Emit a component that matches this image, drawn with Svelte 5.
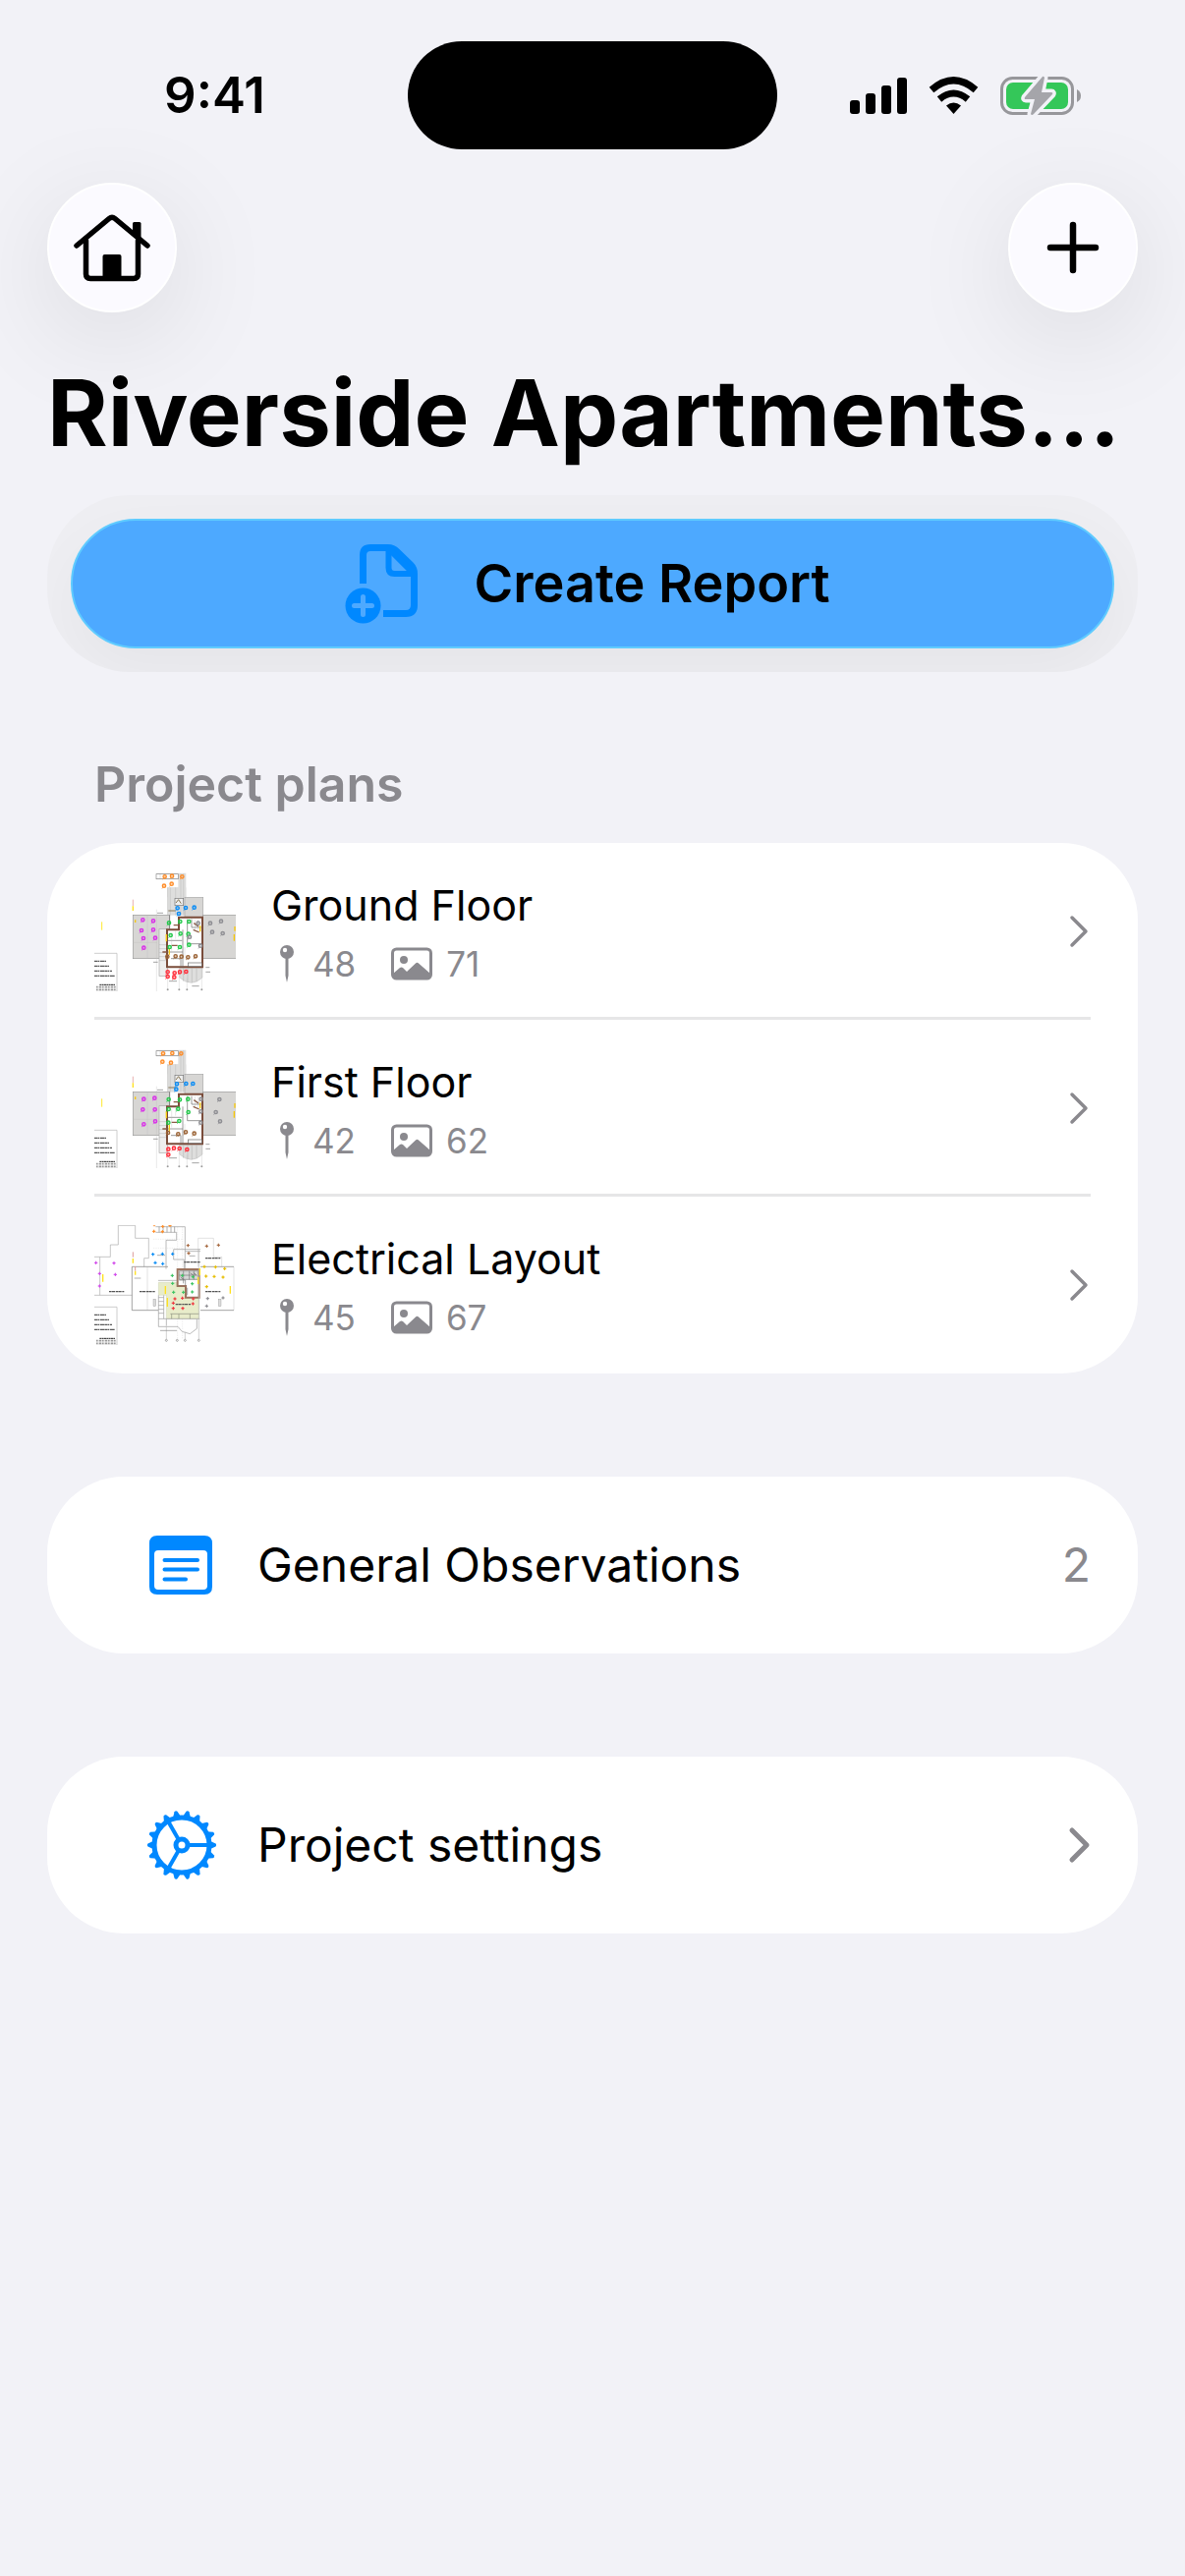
<script lang="ts">
  type Dot = [number, number];
  type Pins = { color: string; at: Dot[] }[];

  interface Plan {
    name: string;
    pins: number;
    photos: number;
    kind: 'floor' | 'electrical';
    markers: Pins;
  }

  const plans: Plan[] = [
    {
      name: 'Ground Floor',
      pins: 48,
      photos: 71,
      kind: 'floor',
      markers: [
        { color: '#ff8d28', at: [[263, 70], [285, 68], [316, 70], [261, 98], [284, 92]] },
        { color: '#0a8cf5', at: [[302, 166], [327, 165], [353, 164], [306, 183]] },
        { color: '#d930e8', at: [[196, 202], [228, 205], [192, 234], [228, 232], [198, 258], [234, 257], [199, 287]] },
        { color: '#22c94a', at: [[276, 211], [310, 207], [337, 207], [281, 249], [311, 244], [335, 245], [278, 285], [309, 285], [337, 278]] },
        { color: '#8e8e93', at: [[402, 212], [435, 206], [408, 239], [440, 243], [365, 212], [372, 281], [339, 254]] },
        { color: '#9a6234', at: [[271, 314], [296, 313], [314, 314], [334, 316], [357, 313]] },
        { color: '#ff2d3a', at: [[272, 361], [272, 375], [293, 364], [292, 377], [309, 361], [328, 360]] }
      ]
    },
    {
      name: 'First Floor',
      pins: 42,
      photos: 62,
      kind: 'floor',
      markers: [
        { color: '#ff8d28', at: [[258, 70], [286, 69], [313, 70], [256, 95], [282, 98]] },
        { color: '#0a8cf5', at: [[300, 163], [328, 162], [349, 162], [298, 179]] },
        { color: '#d930e8', at: [[199, 209], [232, 206], [196, 241], [233, 241], [234, 277], [199, 286]] },
        { color: '#22c94a', at: [[275, 210], [309, 211], [334, 209], [275, 240], [304, 239], [335, 249], [274, 281], [307, 276]] },
        { color: '#8e8e93', at: [[430, 210], [419, 249], [432, 277], [374, 209], [373, 247], [373, 281]] },
        { color: '#9a6234', at: [[273, 312], [304, 316], [327, 310], [353, 314]] },
        { color: '#ff2d3a', at: [[274, 362], [274, 379], [291, 359], [308, 360], [331, 363]] }
      ]
    },
    {
      name: 'Electrical Layout',
      pins: 45,
      photos: 67,
      kind: 'electrical',
      markers: [
        { color: '#ff8d28', at: [[231, 53], [257, 58], [279, 55], [230, 73], [256, 74]] },
        { color: '#0a8cf5', at: [[227, 143], [256, 142], [287, 142], [234, 169], [257, 172]] },
        { color: '#d148ea', at: [[53, 169], [108, 170], [64, 202], [112, 205], [64, 240]] },
        { color: '#3cc463', at: [[286, 208], [317, 208], [349, 212], [287, 232], [347, 233], [290, 259], [320, 259], [347, 258]] },
        { color: '#a86a42', at: [[334, 116], [391, 118], [427, 115], [336, 140]] },
        { color: '#e6bd00', at: [[384, 181], [418, 182], [446, 187], [389, 210], [414, 211], [441, 213], [391, 242]] },
        { color: '#f0353f', at: [[294, 279], [317, 277], [350, 279], [289, 292], [349, 294], [289, 308], [318, 308]] },
        { color: '#8e8e93', at: [[394, 278], [441, 276], [391, 301]] }
      ]
    }
  ];

  const teeth = Array.from({ length: 18 }, (_, i) => i * 20);
  const legend = [328, 343, 358, 373];
</script>

{#snippet chevron(heavy: boolean)}
  <svg class="chevron" viewBox="0 0 24 40" fill="none" stroke="currentColor" stroke-linecap="round" stroke-linejoin="round" stroke-width={heavy ? 5 : 3.5}>
    <path d={heavy ? 'M5 5 L20 20 L5 35' : 'M5 6 L19 20 L5 34'} />
  </svg>
{/snippet}

{#snippet legendBox()}
  <path d="M48 304 H117 V421 H54" fill="none" stroke="#b5b5b5" stroke-width="2" />
  {#each legend as y, i}
    <path d="M48 {y} h{36 + i * 9}" stroke="#222" stroke-width="4" stroke-dasharray="9 1 5 2 13 1" opacity="0.75" />
  {/each}
  <path d="M64 400 H111" stroke="#222" stroke-width="3" stroke-dasharray="6 1" />
  <path d="M54 407 H114 M54 415 H114" stroke="#555" stroke-width="5" stroke-dasharray="5 3 8 2" opacity="0.6" />
{/snippet}

{#snippet thumbnail(plan: Plan)}
  <svg class="thumb" viewBox="48 54 432 366" aria-hidden="true">
    {#if plan.kind === 'floor'}
      <path d="M71 208 V233" stroke="#ffe92e" stroke-width="3" />
      <path d="M166 140 V160" stroke="#d88" stroke-width="2" />
      <path d="M166 160 V174" stroke="#ffe11e" stroke-width="4" />
      <!-- terraces -->
      <path d="M237 59 H328 V133 H271 V103 H304 V79 H237 Z" fill="#dededd" />
      <rect x="271" y="103" width="57" height="85" fill="#dededd" />
      <rect x="237" y="62" width="67" height="15" fill="#fff" stroke="#888" stroke-width="2" />
      <path d="M249 62 V77 M264 62 V77 M290 62 V77 M272 103 V188 M280 103 V188 M296 103 V188 M312 60 V188 M320 60 V188" stroke="#aaa" stroke-width="1" />
      <rect x="324" y="133" width="56" height="60" fill="#d7d6d4" stroke="#a9a9a9" stroke-width="2" />
      <rect x="166" y="187" width="112" height="133" fill="#d7d6d4" stroke="#999" stroke-width="2" />
      <rect x="380" y="187" width="102" height="133" fill="#d7d6d4" stroke="#999" stroke-width="2" />
      <path d="M166 271 H240 M210 187 V320 M238 170 V420" stroke="#bbb" stroke-width="1" />
      <rect x="246" y="230" width="26" height="143" fill="#eee" stroke="#aaa" stroke-width="2" />
      <path d="M246 278 h24 M246 290 h24 M246 302 h24 M246 314 h24 M246 326 h24" stroke="#999" stroke-width="1" />
      <path d="M308 348 H378 V378 Q345 410 308 378 Z" fill="#dededd" stroke="#aaa" />
      <path d="M320 350 V390 M333 350 V392 M346 350 V394 M360 350 V390" stroke="#999" stroke-width="1" />
      <!-- building shell -->
      <path d="M306 194 H378 V346 H270 V232 H306 Z" fill="#fff" stroke="#7a4c3a" stroke-width="6" />
      <path d="M278 188 V228 M270 300 H318 M318 232 V346 M332 200 V275 H376 M272 265 H316 M282 320 H312 V344 M345 200 V225 H374" fill="none" stroke="#666" stroke-width="2" />
      <path d="M284 240 V296 M296 236 V260 M324 285 V320 M355 200 V232 M365 200 V240" stroke="#b5b5b5" stroke-width="1" />
      <rect x="294" y="136" width="26" height="22" fill="#eee" stroke="#777" stroke-width="2" />
      <path d="M297 150 l8 -10 l8 12 M274 174 H296" fill="none" stroke="#875" stroke-width="3" />
      <path d="M352 212 l14 10 M350 232 l18 8 M284 280 h18 M290 218 h14 M256 300 h14" stroke="#8a5a44" stroke-width="4" />
      <rect x="334" y="333" width="42" height="11" fill="#fff" stroke="#666" stroke-width="2" />
      <path d="M268 246 V268 M277 288 V308 M371 220 V238 M173 202 V210 M477 222 V236 M475 246 V266" stroke="#f5c60c" stroke-width="4" />
      <path d="M272 350 V412 M307 350 V412 M331 380 V412 M376 350 V412" stroke="#bbb" stroke-width="1" />
      <path d="M276 389 h24 M346 404 h22 M388 347 h12 M388 361 h14 M228 331 h14 M240 181 h18" stroke="#777" stroke-width="2" />
      {#each [272, 307, 331, 376] as x}
        <circle cx={x} cy="415" r="3" fill="#999" />
      {/each}
      {@render legendBox()}
      {#each plan.markers as group}
        {#each group.at as [x, y]}
          <circle cx={x} cy={y} r="5" fill={group.color} fill-opacity="0.35" stroke={group.color} stroke-width="4" />
          <path d="M{x - 3} {y + 5} l-4 3" stroke={group.color} stroke-width="2" />
        {/each}
      {/each}
    {:else}
      <path d="M48 151 H97 V114 H121 V55 H173 V94 H214 V155 H200 V181 M48 268 H163 M65 151 V268" fill="none" stroke="#aaa" stroke-width="2" />
      <path d="M163 181 H273 M163 181 V314 H243 M372 181 H474 M474 314 H372" fill="none" stroke="#777" stroke-width="2" />
      <path d="M210 181 V314 M474 181 V314 M365 181 V94 H412 V151 H437 V181" fill="none" stroke="#aaa" stroke-width="1" />
      <path d="M235 59 H325 V188 M235 76 H299 V100 H267 V188 M290 128 H372 M290 128 V159 H322 V188 M325 134 H372" fill="none" stroke="#999" stroke-width="2" />
      <path d="M246 59 V76 M258 59 V76 M270 59 V76 M282 59 V76 M293 59 V76" stroke="#888" stroke-width="2" />
      <path d="M228 97 H320 M228 124 H320 M302 60 V400 M317 60 V400" stroke="#ccc" stroke-width="1" stroke-dasharray="4 3" />
      <path d="M244 229 H300 V240 H328 V275 H368 V340 H268 V268 H244 Z" fill="#e8ecca" stroke="#bdc3a0" stroke-width="1" />
      <path d="M302 189 H368 V275 H327 V240 H302 Z" fill="#fff" stroke="#9b735e" stroke-width="6" />
      <path d="M307 194 H365 V220 H307 Z" fill="#d7d7d7" stroke="#777" stroke-width="2" />
      <path d="M320 194 V232 M338 194 V220 M352 194 V220 M307 207 H360 M307 222 H326 V238 M332 245 V268" fill="none" stroke="#777" stroke-width="2" />
      <path d="M342 200 l8 8 M352 200 l8 8 M312 212 l8 8" stroke="#444" stroke-width="2" />
      <path d="M243 223 H300 M244 268 V364 H303 L316 379 L340 386 L361 370 V342 M268 340 V360" fill="none" stroke="#999" stroke-width="2" />
      <path d="M244 275 h16 M244 287 h16 M244 299 h16 M244 311 h16 M244 323 h16 M244 340 H370 M260 268 V340" stroke="#999" stroke-width="2" />
      <path d="M280 325 H368 M284 325 V340 M306 325 V340 M340 325 V340" stroke="#8d9180" stroke-width="2" />
      <path d="M268 360 V402 M325 380 V402 M367 128 V402" stroke="#bbb" stroke-width="2" />
      <path d="M93 257 H139 M186 257 H234 M322 167 H372 M387 155 H433 M387 257 H433 M296 296 H342" stroke="#555" stroke-width="4" stroke-dasharray="7 1 10 2" />
      <path d="M249 376 H300 M170 216 H190 M240 146 H264 M338 148 H356" stroke="#888" stroke-width="2" />
      <rect x="228" y="280" width="8" height="22" fill="#ddd" stroke="#888" />
      <rect x="427" y="280" width="8" height="22" fill="#ddd" stroke="#888" />
      <path d="M74 204 V227 M166 156 V170 M265 240 V264 M271 276 V303 M365 212 V234 M370 186 V207 M463 240 V263 M173 194 V206" stroke="#ffe11e" stroke-width="4" />
      <path d="M166 136 V152 M173 180 V194" stroke="#d99" stroke-width="3" />
      {#each [268, 301, 325, 367] as x}
        <circle cx={x} cy="406" r="3" fill="#fff" stroke="#888" stroke-width="2" />
      {/each}
      {@render legendBox()}
      {#each plan.markers as group}
        {#each group.at as [x, y]}
          <path d="M{x - 5} {y} h10 M{x} {y - 5} v10" stroke={group.color} stroke-width="3" />
          <circle cx={x} cy={y} r="2.5" fill={group.color} />
        {/each}
      {/each}
    {/if}
  </svg>
{/snippet}

<div class="screen">
  <div class="status">
    <time>9:41</time>
    <div class="island"></div>
    <svg class="indicators" viewBox="865 77 236 41" role="img" aria-label="Signal, Wi-Fi, charging">
      <rect x="865" y="102" width="10" height="14" rx="3" />
      <rect x="881" y="95" width="10" height="21" rx="3" />
      <rect x="897" y="87" width="10" height="29" rx="3" />
      <rect x="913" y="79" width="10" height="37" rx="3" />
      <path d="M948 91.500 Q970.500 72 993 91.500" fill="none" stroke="#000" stroke-width="7" />
      <path d="M956 101 Q970.500 89 985 101" fill="none" stroke="#000" stroke-width="7" />
      <path d="M963 107.500 Q970.500 101.500 978 107.500 L970.500 116 Z" />
      <rect x="1019.500" y="79.500" width="72" height="36" rx="11" fill="none" stroke="#97979b" stroke-width="3" />
      <rect x="1024" y="84" width="63" height="27" rx="7" fill="#34c759" />
      <path d="M1096 91 Q1100 93 1100 97.500 Q1100 102 1096 104 Z" fill="#97979b" />
      <path d="M1061 78 L1043 99 Q1042 101 1044 101 H1053 L1049 116 Q1050 118 1052 116 L1071 96 Q1072 94 1070 94 H1060 L1063 79 Q1062 77 1061 78 Z" fill="#a5a5aa" stroke="#f2f2f7" stroke-width="7" stroke-linejoin="round" paint-order="stroke" />
    </svg>
  </div>

  <nav class="toolbar">
    <button class="round" aria-label="Home">
      <svg viewBox="0 0 84 84" fill="none" stroke="#000" stroke-linecap="round" stroke-linejoin="round">
        <path d="M6 40 L39 12.500 Q42 10 45 12.500 L78 40" stroke-width="5.500" />
        <path d="M15.500 35 V69 Q15.500 73.500 20 73.500 H64 Q68.500 73.500 68.500 69 V35" stroke-width="5.500" />
        <path d="M63 17.500 Q63 16 64.500 16 H70 Q71.500 16 71.500 17.500 V36 L63 28 Z" fill="#000" stroke="none" />
        <path d="M32.500 75 V51 Q32.500 49 34.500 49 H49.500 Q51.500 49 51.500 51 V75 Z" fill="#000" stroke="none" />
      </svg>
    </button>
    <button class="round" aria-label="Add">
      <svg viewBox="0 0 84 84" fill="none" stroke="#000" stroke-linecap="round" stroke-width="6.500">
        <path d="M19 42 H65 M42 19 V65" />
      </svg>
    </button>
  </nav>

  <h1>Riverside Apartments…</h1>

  <div class="report">
    <button class="create">
      <svg viewBox="354 551 77 82" fill="none" stroke="#0088ff" stroke-width="7">
        <path d="M372.500 592 V563 Q372.500 555.500 380 555.500 H398 Q403 555.500 407 559.500 L421 573 Q424.500 576.500 424.500 582 V614 Q424.500 622.500 416 622.500 H393" />
        <path d="M398.500 556 V576 Q398.500 582 404.500 582 H424" stroke-width="6" />
        <path d="M401 559 L421 579" stroke-width="6" />
        <circle cx="372.500" cy="614.500" r="18" fill="#0088ff" stroke="none" />
        <path d="M363.500 614.500 H381.500 M372.500 605.500 V623.500" stroke="#4da9ff" stroke-width="5" stroke-linecap="round" />
      </svg>
      Create Report
    </button>
  </div>

  <h2>Project plans</h2>

  <ul class="card plans">
    {#each plans as plan}
      <li>
        <a class="plan" href="#plan">
          {@render thumbnail(plan)}
          <span class="details">
            <span class="name">{plan.name}</span>
            <span class="meta">
              <svg class="pin" viewBox="0 0 16 40" aria-hidden="true">
                <circle cx="8" cy="8" r="7" fill="currentColor" />
                <path d="M6.500 14 H9.500 V32 L8 39 L6.500 32 Z" fill="currentColor" />
                <circle cx="6" cy="6" r="2.200" fill="#fff" />
              </svg>
              <span>{plan.pins}</span>
              <svg class="photo" viewBox="0 0 42 34" aria-hidden="true">
                <rect x="1.500" y="2" width="39" height="30" rx="4" fill="none" stroke="currentColor" stroke-width="3" />
                <circle cx="13" cy="13" r="4" fill="currentColor" />
                <path d="M2 27 L9 21 Q10.500 20 12 21 L16 25 L25 16.500 Q26.500 15 28 16.500 L40 27 V30 Q40 32 37 32 H5 Q2 32 2 30 Z" fill="currentColor" />
              </svg>
              <span>{plan.photos}</span>
            </span>
          </span>
          {@render chevron(false)}
        </a>
      </li>
    {/each}
  </ul>

  <a class="card link" href="#observations">
    <svg class="icon" viewBox="0 0 72 72" aria-hidden="true">
      <path fill-rule="evenodd" fill="#0088ff" d="M12 6 H60 Q68 6 68 14 V58 Q68 66 60 66 H12 Q4 66 4 58 V14 Q4 6 12 6 Z M13 21 Q9 21 9 25 V57 Q9 61 13 61 H59 Q63 61 63 57 V25 Q63 21 59 21 Z" />
      <path d="M19.500 31 H53 M19.500 40.500 H53 M19.500 50.500 H41" stroke="#0088ff" stroke-width="4" stroke-linecap="round" />
    </svg>
    <span class="label">General Observations</span>
    <span class="count">2</span>
  </a>

  <a class="card link" href="#settings">
    <svg class="icon" viewBox="-37 -36 72 72" fill="none" stroke="#0088ff" aria-hidden="true">
      {#each teeth as angle}
        <path d="M28 -4.500 L34.500 -1.500 Q36 0 34.500 1.500 L28 4.500 Z" fill="#0088ff" stroke="none" transform="rotate({angle})" />
      {/each}
      <circle r="28" stroke-width="5" />
      <circle r="6" stroke-width="5" />
      {#each [0, 120, 240] as angle}
        <path d="M7 0 H27" stroke-width="4" transform="rotate({angle})" />
      {/each}
    </svg>
    <span class="label">Project settings</span>
    {@render chevron(true)}
  </a>
</div>

<style>
  :global(body) {
    margin: 0;
    background: #f2f2f7;
  }
  .screen {
    box-sizing: border-box;
    min-height: 100vh;
    padding: 0 48px 48px;
    background: #f2f2f7;
    color: #000;
    font-family: Inter, 'Liberation Sans', sans-serif;
    font-size: 48px;
    line-height: 60px;
  }
  button {
    padding: 0;
    border: 0;
    font: inherit;
    color: inherit;
    cursor: pointer;
  }
  a {
    color: inherit;
    text-decoration: none;
  }
  svg {
    display: block;
    flex: none;
  }

  .status {
    display: grid;
    grid-template-columns: 1fr 376px 1fr;
    align-items: center;
    margin: 0 -48px;
    padding-top: 42px;
  }
  .status time {
    padding-left: 22px;
    text-align: center;
    font-size: 51px;
    font-weight: 600;
  }
  .island {
    height: 110px;
    border-radius: 55px;
    background: #000;
  }
  .indicators {
    width: 236px;
    height: 41px;
    margin-right: 32px;
    justify-self: center;
  }

  .toolbar {
    display: flex;
    justify-content: space-between;
    margin-top: 34px;
  }
  .round {
    box-sizing: border-box;
    display: grid;
    place-items: center;
    width: 132px;
    height: 132px;
    border: 2px solid #fff;
    border-radius: 50%;
    background: #fbfaff;
    box-shadow: 0 24px 110px rgba(0, 0, 0, 0.1);
  }
  .round svg {
    width: 84px;
    height: 84px;
  }

  h1 {
    margin: 42px 0 24px;
    overflow: hidden;
    font-size: 94px;
    font-weight: 700;
    line-height: 120px;
    white-space: nowrap;
  }

  .report {
    padding: 24px;
    overflow: hidden;
    border-radius: 84px;
    background: #eeeef2;
  }
  .create {
    box-sizing: border-box;
    display: flex;
    align-items: center;
    justify-content: center;
    gap: 54px;
    width: 100%;
    height: 132px;
    padding-right: 10px;
    border: 2px solid #5fcbff;
    border-radius: 66px;
    background: #4da9ff;
    box-shadow: 0 24px 60px rgba(0, 0, 0, 0.04);
    font-weight: 600;
    font-size: 54px;
  }
  .create svg {
    width: 77px;
    height: 82px;
  }

  h2 {
    margin: 84px 48px 30px;
    color: #8a898e;
    font-size: 50px;
    font-weight: 600;
  }

  .card {
    border-radius: 78px;
    background: #fff;
  }
  .plans {
    margin: 0;
    padding: 0 48px;
    list-style: none;
  }
  .plans li:not(:last-child) {
    box-shadow: inset 0 -3px #e6e6e7;
  }
  .plan {
    display: flex;
    align-items: center;
    height: 180px;
  }
  .thumb {
    width: 144px;
    height: 122px;
  }
  .details {
    flex: 1;
    margin-left: 36px;
    padding-top: 6px;
  }
  .name {
    display: block;
    font-size: 43px;
  }
  .meta {
    display: flex;
    align-items: center;
    color: #8a898e;
    font-size: 35px;
  }
  .pin {
    width: 16px;
    height: 40px;
    margin: 0 18px 0 8px;
  }
  .photo {
    width: 42px;
    height: 34px;
    margin: 0 14px 0 36px;
  }
  .chevron {
    width: 24px;
    height: 40px;
    color: #8a898e;
  }

  .link {
    display: flex;
    align-items: center;
    height: 180px;
    margin-top: 105px;
    padding: 0 48px 0 100px;
  }
  .icon {
    width: 72px;
    height: 72px;
  }
  .label {
    flex: 1;
    margin-left: 42px;
  }
  .count {
    color: #8a898e;
  }
</style>
